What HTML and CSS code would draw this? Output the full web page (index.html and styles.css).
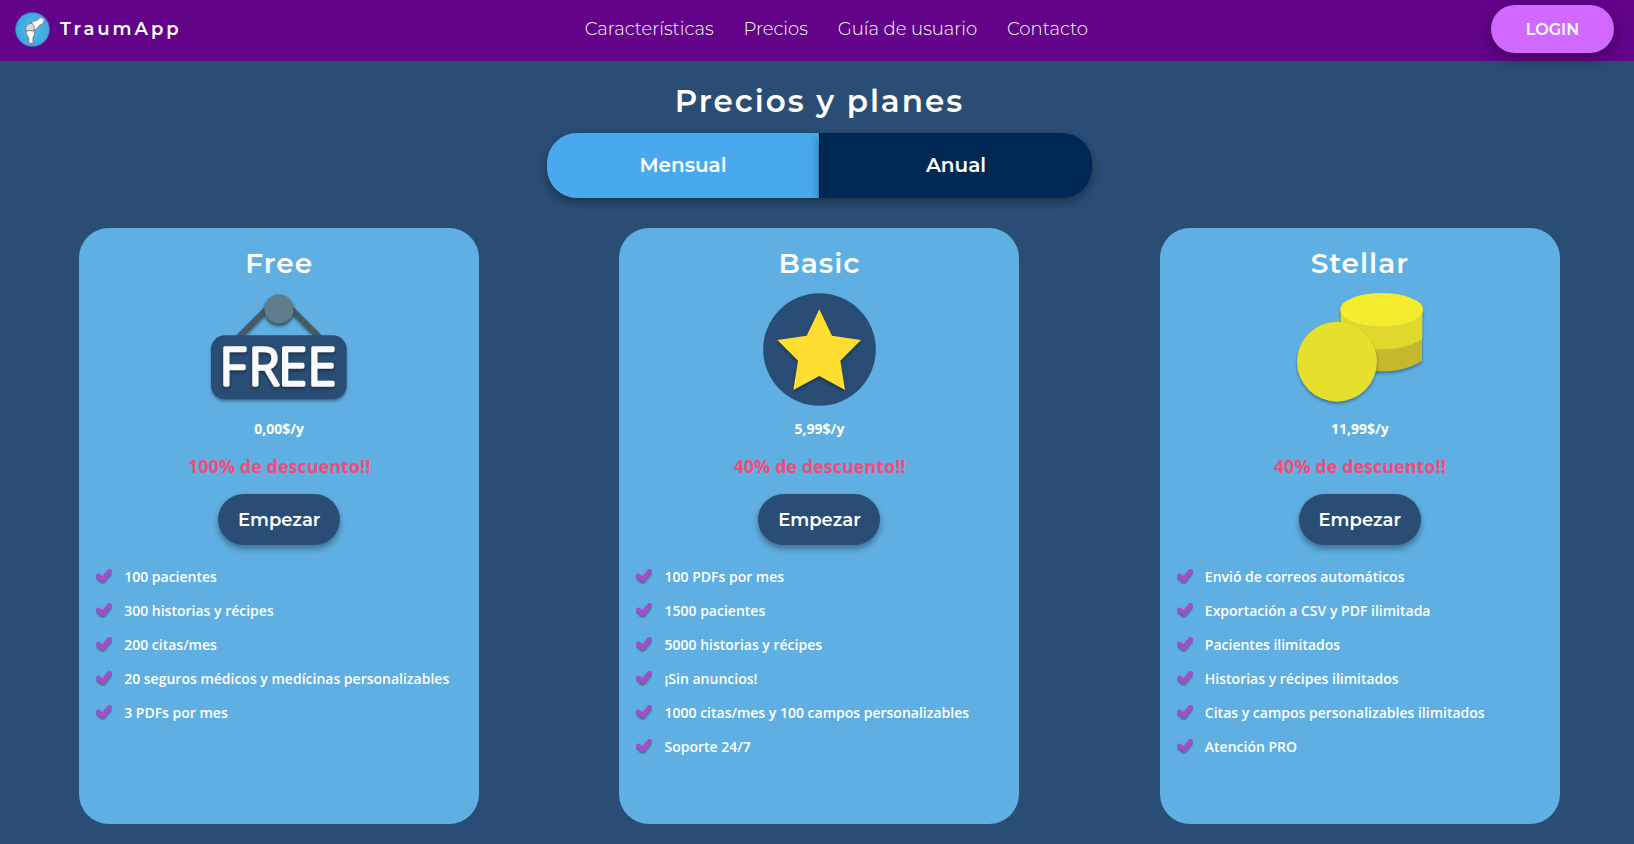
FILE: index.html
```html
<!DOCTYPE html>
<html lang="es">
<head>
<meta charset="utf-8">
<meta name="viewport" content="width=device-width, initial-scale=1">
<title>TraumApp - Precios y planes</title>
<link rel="stylesheet" href="styles.css">
</head>
<body>
<svg class="sprite" width="0" height="0" aria-hidden="true">
  <symbol id="check" viewBox="0 0 48 46">
    <path class="check-mark" d="M7 21 L20 33 L41 7"/>
  </symbol>
</svg>

<header class="topbar">
  <a class="brand" href="#">
    <svg class="brand-logo" viewBox="0 0 105 105" aria-hidden="true">
      <defs>
        <radialGradient id="logo-bg">
          <stop offset="0" stop-color="#4dbdea"/>
          <stop offset="1" stop-color="#3fa5de"/>
        </radialGradient>
      </defs>
      <circle cx="52.500" cy="52.500" r="51" fill="url(#logo-bg)" stroke="#2e6fa8" stroke-width="2"/>
      <g stroke="#7d7f86" stroke-width="3" stroke-linejoin="round">
        <path fill="#ffffff" d="M50 31 C56 25 64 29 70 22 C73 16 79 15 82 20 C88 16 90 24 85 28 C88 34 80 36 76 38 C69 42 67 52 58 55 Z"/>
        <path fill="#d9d9dc" d="M32 56 C30 43 38 36 48 34 C58 38 60 46 56 57 Z"/>
        <path fill="#ffffff" d="M33 58 C40 55 50 55 58 58 C62 65 56 71 54 77 L54 94 L42 94 L41 77 C38 71 32 66 33 58 Z"/>
      </g>
    </svg>
    <span class="brand-name">TraumApp</span>
  </a>
  <nav class="menu">
    <a href="#">Características</a>
    <a href="#">Precios</a>
    <a href="#">Guía de usuario</a>
    <a href="#">Contacto</a>
  </nav>
  <button class="login" type="button">LOGIN</button>
</header>

<main class="pricing">
  <h1 class="title">Precios y planes</h1>
  <div class="toggle">
    <button class="period period-month" type="button">Mensual</button>
    <button class="period period-year" type="button">Anual</button>
  </div>

  <div class="plans">
    <section class="plan">
      <h2 class="plan-name">Free</h2>
      <svg class="plan-icon" viewBox="418 218 420 339" role="img" aria-label="Free">
        <g class="shadowed">
          <path d="M508 350 L592 266 M748 350 L664 266" stroke="#455a64" stroke-width="19" fill="none"/>
          <circle class="shadowed" cx="628" cy="266" r="44" fill="#607d8b"/>
        </g>
        <rect class="shadowed" x="424" y="345" width="407" height="192" rx="42" fill="#294d74"/>
        <text class="sign-text shadowed" x="451 538 627 715" y="495">FREE</text>
      </svg>
      <p class="price">0,00$/y</p>
      <p class="discount">100% de descuento!!</p>
      <button class="start" type="button">Empezar</button>
      <ul class="features">
        <li><svg class="check"><use href="#check"/></svg>100 pacientes</li>
        <li><svg class="check"><use href="#check"/></svg>300 historias y récipes</li>
        <li><svg class="check"><use href="#check"/></svg>200 citas/mes</li>
        <li><svg class="check"><use href="#check"/></svg>20 seguros médicos y medícinas personalizables</li>
        <li><svg class="check"><use href="#check"/></svg>3 PDFs por mes</li>
      </ul>
    </section>

    <section class="plan">
      <h2 class="plan-name">Basic</h2>
      <svg class="plan-icon" viewBox="189 218 339 339" aria-hidden="true">
        <circle cx="358.500" cy="387.500" r="169" fill="#294d74"/>
        <path class="shadowed" fill="#ffde2f" d="M358 267 L396 346 L483 359 L421 421 L435 509 L358 467 L280 509 L294 421 L232 359 L320 346 Z"/>
      </svg>
      <p class="price">5,99$/y</p>
      <p class="discount">40% de descuento!!</p>
      <button class="start" type="button">Empezar</button>
      <ul class="features">
        <li><svg class="check"><use href="#check"/></svg>100 PDFs por mes</li>
        <li><svg class="check"><use href="#check"/></svg>1500 pacientes</li>
        <li><svg class="check"><use href="#check"/></svg>5000 historias y récipes</li>
        <li><svg class="check"><use href="#check"/></svg>¡Sin anuncios!</li>
        <li><svg class="check"><use href="#check"/></svg>1000 citas/mes y 100 campos personalizables</li>
        <li><svg class="check"><use href="#check"/></svg>Soporte 24/7</li>
      </ul>
    </section>

    <section class="plan">
      <h2 class="plan-name">Stellar</h2>
      <svg class="plan-icon" viewBox="171 218 379 339" aria-hidden="true">
        <g class="shadowed">
          <path fill="#c4b82c" d="M303 340 H546 V422 C512 443 474 453 425 453 C378 453 335 443 303 422 Z"/>
          <path fill="#e0d82c" d="M302 268 H547 V356 C512 377 470 387 425 387 C378 387 335 377 302 356 Z"/>
          <ellipse cx="425" cy="268" rx="125" ry="50" fill="#f4ec2c"/>
        </g>
        <circle class="shadowed" cx="291" cy="424" r="120" fill="#e5df2d"/>
      </svg>
      <p class="price">11,99$/y</p>
      <p class="discount">40% de descuento!!</p>
      <button class="start" type="button">Empezar</button>
      <ul class="features">
        <li><svg class="check"><use href="#check"/></svg>Envió de correos automáticos</li>
        <li><svg class="check"><use href="#check"/></svg>Exportación a CSV y PDF ilimitada</li>
        <li><svg class="check"><use href="#check"/></svg>Pacientes ilimitados</li>
        <li><svg class="check"><use href="#check"/></svg>Historias y récipes ilimitados</li>
        <li><svg class="check"><use href="#check"/></svg>Citas y campos personalizables ilimitados</li>
        <li><svg class="check"><use href="#check"/></svg>Atención PRO</li>
      </ul>
    </section>
  </div>
</main>
</body>
</html>
```

FILE: styles.css
```css
* {
  box-sizing: border-box;
}

body {
  margin: 0;
  background: #294d74;
  color: #fff;
  font-family: "Open Sans", sans-serif;
}

h1, h2, p, ul {
  margin: 0;
  padding: 0;
}

button {
  border: 0;
  color: #fff;
  font-family: Montserrat, Inter, sans-serif;
  cursor: pointer;
}

.sprite {
  display: none;
}

.topbar {
  display: flex;
  align-items: flex-start;
  justify-content: space-between;
  height: 61px;
  padding: 5px 20px 0 15px;
  background: #620389;
  font-family: Montserrat, Inter, sans-serif;
}

.brand {
  display: flex;
  align-items: center;
  gap: 10px;
  height: 48px;
  color: #fff;
  text-decoration: none;
}

.brand-logo {
  width: 35px;
  height: 35px;
}

.brand-name {
  font-size: 18px;
  font-weight: 600;
  letter-spacing: 3px;
}

.menu {
  display: flex;
  align-items: center;
  gap: 30px;
  height: 48px;
}

.menu a {
  color: #fff;
  font-size: 18px;
  font-weight: 300;
  text-decoration: none;
}

.login {
  width: 123px;
  height: 48px;
  border-radius: 24px;
  background: #d168ff;
  box-shadow: 0 5px 15px rgba(0, 0, 0, 0.35);
  font-size: 16px;
  font-weight: 600;
}

.pricing {
  display: flex;
  flex-direction: column;
  align-items: center;
  padding: 20px 4px 20px 9px;
}

.title {
  font-family: Montserrat, Inter, sans-serif;
  font-size: 31px;
  font-weight: 600;
  line-height: 40px;
  letter-spacing: 2px;
}

.toggle {
  display: flex;
  width: 545px;
  max-width: 100%;
  margin: 12px 0 30px;
}

.period {
  flex: 1;
  height: 65px;
  padding-bottom: 2px;
  box-shadow: 0 4px 10px rgba(0, 0, 0, 0.35);
  font-size: 20px;
  font-weight: 600;
}

.period-month {
  border-radius: 30px 0 0 30px;
  background: #48a9ee;
}

.period-year {
  border-left: 1px solid #000;
  border-radius: 0 30px 30px 0;
  background: #002855;
}

.plans {
  display: grid;
  grid-template-columns: repeat(3, 1fr);
  justify-items: center;
  width: 100%;
}

.plan {
  display: flex;
  flex-direction: column;
  align-items: center;
  gap: 14px;
  width: 100%;
  max-width: 400px;
  min-height: 596px;
  padding: 17px;
  border-radius: 30px;
  background: #60afe3;
}

.plan-name {
  padding-top: 2px;
  font-family: Montserrat, Inter, sans-serif;
  font-size: 28px;
  font-weight: 600;
  line-height: 32px;
  letter-spacing: 1px;
}

.plan-icon {
  height: 113px;
  overflow: visible;
}

.shadowed {
  filter: drop-shadow(0 6px 5px rgba(0, 0, 0, 0.35));
}

.sign-text {
  fill: #fafafa;
  stroke: #fafafa;
  stroke-width: 11;
  stroke-linejoin: round;
  font-family: "Open Sans", sans-serif;
  font-size: 152px;
  font-weight: 300;
}

.price {
  font-size: 14px;
  font-weight: 700;
  line-height: 18px;
}

.discount {
  color: #f54a78;
  font-size: 18px;
  font-weight: 700;
  line-height: 28px;
}

.start {
  width: 122px;
  height: 51px;
  border-radius: 26px;
  background: #294d74;
  box-shadow: 0 4px 6px rgba(0, 0, 0, 0.35);
  font-size: 18px;
  font-weight: 600;
}

.features {
  width: 100%;
  list-style: none;
}

.features li {
  display: flex;
  align-items: center;
  gap: 12px;
  height: 34px;
  font-size: 14px;
  font-weight: 600;
}

.check {
  width: 16px;
  height: 15px;
  flex: none;
}

.check-mark {
  fill: none;
  stroke: #a64bcb;
  stroke-width: 14;
  stroke-linecap: round;
  stroke-linejoin: round;
  filter: drop-shadow(0 5px 3px rgba(0, 0, 0, 0.45));
}
```
